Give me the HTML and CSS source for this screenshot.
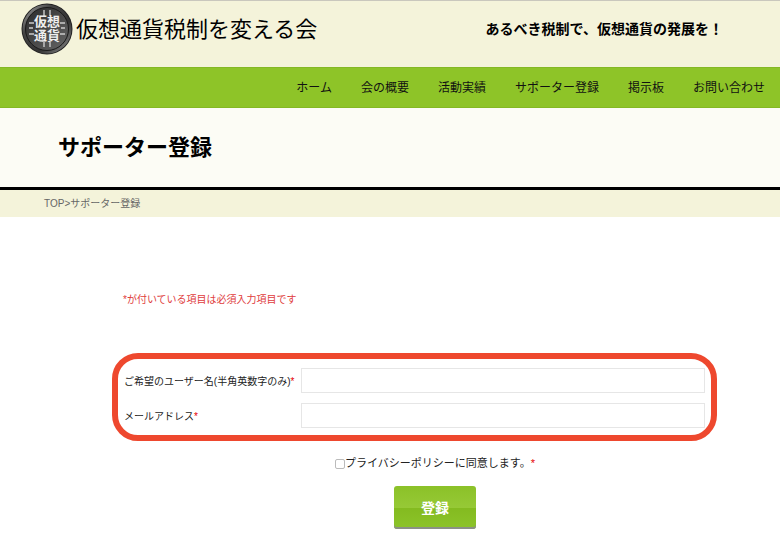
FILE: index.html
```html
<!DOCTYPE html>
<html lang="ja">
<head>
  <meta charset="UTF-8">
  <meta name="viewport" content="width=device-width, initial-scale=1.0">
  <title>サポーター登録 | 仮想通貨税制を変える会</title>
  <link rel="stylesheet" href="styles.css">
</head>
<body>
  <header class="header">
    <a class="brand" href="#">
      <svg class="logo" viewBox="0 0 52 52" aria-hidden="true">
        <defs>
          <linearGradient id="rim" x1="0" y1="0" x2="1" y2="1">
            <stop offset="0" stop-color="#b0b0b0"/>
            <stop offset="0.3" stop-color="#444"/>
            <stop offset="0.65" stop-color="#333"/>
            <stop offset="1" stop-color="#999"/>
          </linearGradient>
          <linearGradient id="face" x1="0" y1="0" x2="1" y2="1">
            <stop offset="0" stop-color="#2a2a2a"/>
            <stop offset="1" stop-color="#666"/>
          </linearGradient>
        </defs>
        <circle cx="26" cy="26" r="25.5" fill="#222"/>
        <circle cx="26" cy="26" r="24.5" fill="url(#rim)"/>
        <circle cx="26" cy="26" r="21.5" fill="url(#face)" stroke="#1a1a1a" stroke-width="1"/>
        <path d="M23 7v6M29 7v6M23 39v5M29 39v5M8 20h5M8 25h4M8 31h5M39 20h5M40 25h4M39 31h5" stroke="#ccc" stroke-width="1.4" fill="none"/>
        <g class="logo-text" text-anchor="middle">
          <text x="26" y="23">仮想</text>
          <text x="26" y="37">通貨</text>
        </g>
      </svg>
      <span class="site-name">仮想通貨税制を変える会</span>
    </a>
    <p class="tagline">あるべき税制で、仮想通貨の発展を！</p>
  </header>

  <nav class="nav">
    <a href="#">ホーム</a>
    <a href="#">会の概要</a>
    <a href="#">活動実績</a>
    <a href="#">サポーター登録</a>
    <a href="#">掲示板</a>
    <a href="#">お問い合わせ</a>
  </nav>

  <div class="page-title">
    <h1>サポーター登録</h1>
  </div>
  <div class="breadcrumb"><a href="#">TOP</a>&gt;サポーター登録</div>

  <main class="main">
    <p class="note">*が付いている項目は必須入力項目です</p>
    <form class="form">
      <div class="fields">
        <label for="username">ご希望のユーザー名(半角英数字のみ)<span class="req">*</span></label>
        <input type="text" id="username" name="username">
        <label for="email">メールアドレス<span class="req">*</span></label>
        <input type="email" id="email" name="email">
      </div>
      <div class="agree">
        <input type="checkbox" id="agree" name="agree">
        <label for="agree">プライバシーポリシーに同意します。<span class="req">*</span></label>
      </div>
      <button class="btn" type="submit">登録</button>
    </form>
  </main>
</body>
</html>
```
FILE: styles.css
```css
* {
  box-sizing: border-box;
}
body {
  margin: 0;
  background: #fff;
  color: #222;
  font-family: "Liberation Sans", "Noto Sans CJK JP", sans-serif;
  font-size: 10px;
}
a {
  color: inherit;
  text-decoration: none;
}
.header {
  display: flex;
  justify-content: space-between;
  height: 67px;
  padding: 2px 57px 0 21px;
  border-top: 1px solid #c9c7bd;
  background: #f4f3da;
  color: #000;
}
.brand {
  display: flex;
  align-items: center;
  gap: 3px;
  height: 52px;
}
.logo {
  width: 52px;
  height: 52px;
}
.logo-text {
  fill: #eee;
  font-size: 13px;
  font-weight: bold;
}
.site-name {
  padding-bottom: 4px;
  font-size: 22px;
  white-space: nowrap;
}
.tagline {
  margin: 0;
  font-size: 14px;
  font-weight: bold;
  line-height: 52px;
  white-space: nowrap;
}
.nav {
  display: flex;
  justify-content: flex-end;
  gap: 29px;
  padding: 1px 15px 0;
  background: #8ec428;
  border-top: 1px solid #84b824;
  border-bottom: 1px solid #84b824;
  color: #111;
  font-size: 12px;
  line-height: 38px;
  white-space: nowrap;
}
.page-title {
  padding: 0 58px;
  background: #fcfcf5;
  border-bottom: 3px solid #000;
}
.page-title h1 {
  margin: 0;
  color: #000;
  font-size: 22px;
  line-height: 79px;
}
.breadcrumb {
  padding: 0 44px;
  background: #f4f3da;
  color: #666;
  line-height: 27px;
}
.main {
  padding: 73px 63px 18px 112px;
}
.note {
  margin: 0 11px;
  color: #e03c3c;
  line-height: 20px;
}
.form {
  display: flex;
  flex-direction: column;
  align-items: center;
  margin-top: 43px;
}
.fields {
  display: grid;
  grid-template-columns: 177px 1fr;
  row-gap: 10px;
  align-items: center;
  width: 100%;
  padding: 9px 6px 7px;
  border: 6px solid #ee482e;
  border-radius: 26px;
}
.fields input {
  width: 100%;
  height: 25px;
  padding: 0 6px;
  border: 1px solid #e6e6e6;
  background: #fff;
  font: inherit;
}
.req {
  color: #e60000;
}
.agree {
  display: flex;
  align-items: center;
  margin: 12px 0 13px 41px;
  font-size: 11px;
  line-height: 20px;
}
.agree input {
  appearance: none;
  width: 10px;
  height: 10px;
  margin: 2px 0 0;
  border: 1px solid #bbb;
  border-radius: 2px;
  background: #fff;
}
.agree input:checked {
  background: #8ec428;
}
.btn {
  width: 82px;
  height: 43px;
  margin-left: 41px;
  padding: 0 0 2px;
  border: none;
  border-radius: 3px;
  background: linear-gradient(#8bc128, #96c936 50%, #84bb20 52%, #8cc42a);
  box-shadow: inset 0 -2px 0 #8b9186;
  color: #fff;
  font-family: inherit;
  font-size: 14px;
  font-weight: bold;
  cursor: pointer;
}
```
